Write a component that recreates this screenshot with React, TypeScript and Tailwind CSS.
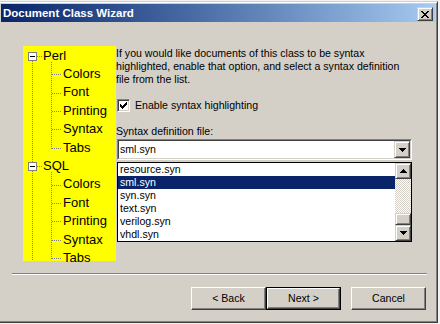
import React from "react";

const raised =
  "border border-t-[#d4d0c8] border-l-[#d4d0c8] border-r-[#404040] border-b-[#404040] shadow-[inset_1px_1px_#ffffff,inset_-1px_-1px_#808080] bg-[#d4d0c8]";
const pushBtn =
  "border border-t-white border-l-white border-r-[#404040] border-b-[#404040] shadow-[inset_-1px_-1px_#808080] bg-[#d4d0c8]";

function Arrow({ up }: { up?: boolean }) {
  return (
    <svg width="7" height="4" viewBox="0 0 7 4" shapeRendering="crispEdges">
      {up ? (
        <path d="M3 0h1v1h1v1h1v1h1v1H0V3h1V2h1V1h1z" fill="#000" />
      ) : (
        <path d="M0 0h7v1H6v1H5v1H4v1H3V3H2V2H1V1H0z" fill="#000" />
      )}
    </svg>
  );
}

function CloseGlyph() {
  return (
    <svg width="8" height="7" viewBox="0 0 8 7" shapeRendering="crispEdges">
      <path
        d="M0 0h2v1h1v1h2V1h1V0h2v1H7v1H6v1H5v1h1v1h1v1h1v1H6V6H5V5H3v1H2v1H0V6h1V5h1V4h1V3H2V2H1V1H0z"
        fill="#000"
      />
    </svg>
  );
}

function Check() {
  return (
    <svg width="7" height="7" viewBox="0 0 7 7" shapeRendering="crispEdges">
      <path
        d="M6 0h1v3H6v1H5v1H4v1H3v1H2V6H1V5H0V2h1v1h1v1h1V3h1V2h1V1h1z"
        fill="#000"
      />
    </svg>
  );
}

const treeRows: { label: string; root?: boolean }[] = [
  { label: "Perl", root: true },
  { label: "Colors" },
  { label: "Font" },
  { label: "Printing" },
  { label: "Syntax" },
  { label: "Tabs" },
  { label: "SQL", root: true },
  { label: "Colors" },
  { label: "Font" },
  { label: "Printing" },
  { label: "Syntax" },
  { label: "Tabs" },
];

const rowY = [10, 28, 47, 65, 83, 102, 120, 139, 157, 175, 194, 212];

function TreeLines() {
  return (
    <svg
      className="absolute left-0 top-0"
      width="93"
      height="215"
      viewBox="0 0 93 215"
      shapeRendering="crispEdges"
    >
      <g stroke="#808080" strokeWidth="1" strokeDasharray="1 1">
        <line x1="9.5" y1="15" x2="9.5" y2="215" />
        <line x1="14" y1="10.5" x2="20" y2="10.5" />
        <line x1="14" y1="120.5" x2="20" y2="120.5" />
        <line x1="28.5" y1="16" x2="28.5" y2="103" />
        <line x1="28.5" y1="126" x2="28.5" y2="213" />
        {rowY.map((y, i) =>
          i === 0 || i === 6 ? null : (
            <line key={i} x1="29" y1={y + 0.5} x2="38" y2={y + 0.5} />
          )
        )}
      </g>
      {[6, 116].map((y) => (
        <g key={y}>
          <rect x="5.5" y={y + 0.5} width="8" height="8" fill="#fff" stroke="#808080" />
          <line x1="7" y1={y + 4.5} x2="12" y2={y + 4.5} stroke="#000" />
        </g>
      ))}
    </svg>
  );
}

export default function App() {
  const files = ["resource.syn", "sml.syn", "syn.syn", "text.syn", "verilog.syn", "vhdl.syn"];
  return (
    <div className="w-[440px] h-[324px] overflow-hidden bg-[#f2f2f2] font-['Liberation_Sans',Arial,sans-serif] text-black">
      <div className="-ml-[2px] mt-[1px] w-[440px] h-[322px] bg-[#d4d0c8] p-[2px] border border-t-[#d4d0c8] border-l-[#d4d0c8] border-r-[#404040] border-b-[#404040] shadow-[inset_1px_1px_#ffffff,inset_-1px_-1px_#808080] flex flex-col">
        {/* Title bar */}
        <div className="h-[18px] flex items-start justify-between bg-gradient-to-r from-[#0a246a] to-[#a6caf0] pl-[2px] pr-[2px]">
          <span className="text-white font-bold text-[11.5px] leading-[18px] whitespace-nowrap">
            Document Class Wizard
          </span>
          <div className={`mt-[3px] w-[16px] h-[14px] flex items-center justify-center ${raised}`}>
            <CloseGlyph />
          </div>
        </div>

        {/* Body */}
        <div className="flex mt-[24px] pl-[22px]">
          <div className="relative w-[93px] h-[215px] bg-[#ffff00]">
            <TreeLines />
            <div className="relative flex flex-col pt-[0.6px]">
              {treeRows.map((r, i) => (
                <div
                  key={i}
                  className={`h-[18.4px] leading-[18.4px] text-[13px] whitespace-nowrap ${
                    r.root ? "pl-[20px]" : "pl-[40px]"
                  }`}
                >
                  {r.label}
                </div>
              ))}
            </div>
          </div>

          <div className="ml-[1px] w-[295px] flex flex-col text-[10.6px]">
            <p className="-ml-[1px] mt-[1px] leading-[13px] whitespace-nowrap">
              If you would like documents of this class to be syntax
              <br />
              highlighted, enable that option, and select a syntax definition
              <br />
              file from the list.
            </p>

            <div className="mt-[13px] h-[13px] flex items-center">
              <div className="w-[13px] h-[13px] bg-white border border-t-[#808080] border-l-[#808080] border-r-white border-b-white shadow-[inset_1px_1px_#404040,inset_-1px_-1px_#d4d0c8] flex items-center justify-center">
                <Check />
              </div>
              <span className="ml-[5px] leading-[13px] whitespace-nowrap">Enable syntax highlighting</span>
            </div>

            <div className="mt-[13px] h-[13px] leading-[13px] -ml-[1px] whitespace-nowrap">
              Syntax definition file:
            </div>

            <div className="mt-[1px] h-[21px] w-[295px] bg-white border border-t-[#808080] border-l-[#808080] border-r-white border-b-white">
              <div className="h-full flex items-center border border-t-[#404040] border-l-[#404040] border-r-[#d4d0c8] border-b-[#d4d0c8]">
                <span className="flex-1 pl-[1px] leading-[13px]">sml.syn</span>
                <div className={`w-[16px] h-[17px] flex items-center justify-center ${raised}`}>
                  <Arrow />
                </div>
              </div>
            </div>

            <div className="mt-[2px] w-[295px] h-[80px] bg-white border border-black flex">
              <div className="flex-1 flex flex-col">
                {files.map((f) => (
                  <div
                    key={f}
                    className={`h-[13px] leading-[13px] pl-[2px] whitespace-nowrap ${
                      f === "sml.syn" ? "bg-[#0a246a] text-white" : ""
                    }`}
                  >
                    {f}
                  </div>
                ))}
              </div>
              <div className="w-[16px] flex flex-col">
                <div className={`h-[16px] flex items-center justify-center ${raised}`}>
                  <Arrow up />
                </div>
                <div className="flex-1 bg-[repeating-conic-gradient(#ffffff_0%_25%,#d4d0c8_0%_50%)] bg-[length:2px_2px]" />
                <div className={`h-[12px] ${raised}`} />
                <div className={`h-[16px] flex items-center justify-center ${raised}`}>
                  <Arrow />
                </div>
              </div>
            </div>
          </div>
        </div>

        {/* Separator */}
        <div className="mt-[12px] ml-[11px] w-[415px] h-[2px] border-t border-t-[#808080] border-b border-b-white" />

        {/* Buttons */}
        <div className="mt-[12px] ml-[190px] flex text-[10.6px]">
          <div className={`w-[75px] h-[23px] flex items-center justify-center ${pushBtn}`}>
            &lt; Back
          </div>
          <div className="w-[75px] h-[23px] border border-black flex">
            <div className={`flex-1 flex items-center justify-center ${pushBtn}`}>Next &gt;</div>
          </div>
          <div className={`ml-[10px] w-[75px] h-[23px] flex items-center justify-center ${pushBtn}`}>
            Cancel
          </div>
        </div>
      </div>
    </div>
  );
}
